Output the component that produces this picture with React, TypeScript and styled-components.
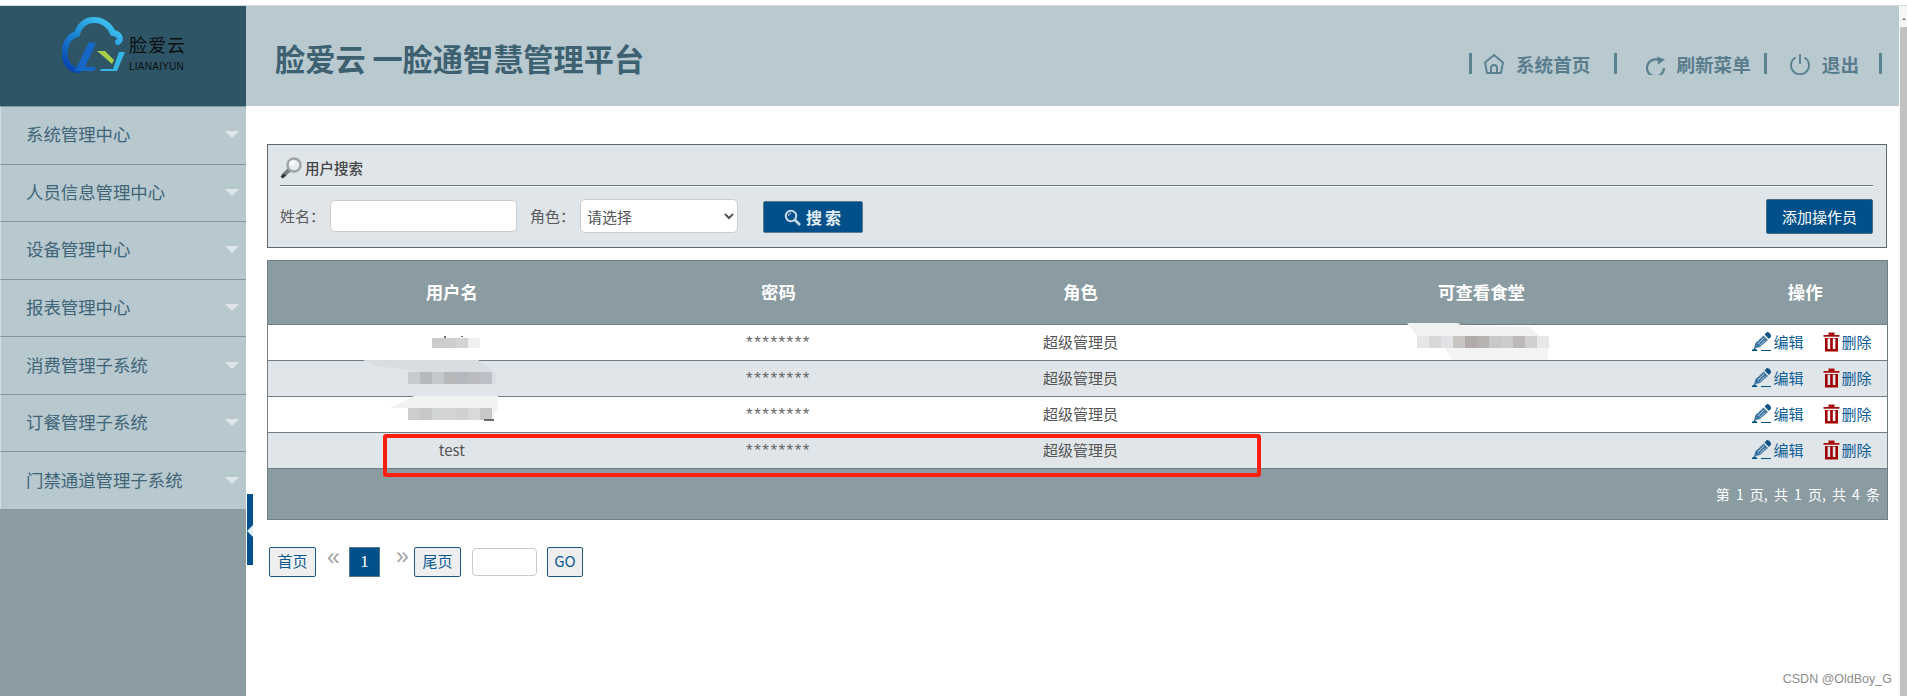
import React from 'react';
import styled, { createGlobalStyle } from 'styled-components';

const Global = createGlobalStyle`
  html, body { margin: 0; padding: 0; background: #fff; overflow: hidden; }
  * { box-sizing: border-box; }
`;
const CJK = `"Noto Sans CJK SC", "Liberation Sans", sans-serif`;

const Page = styled.div`
  width: 1907px; height: 696px; display: flex; flex-direction: column; font-family: ${CJK}; color: #555;
`;
const TopStrip = styled.div`
  height: 6px; flex: none; background: #fff; border-bottom: 1px solid #d4d8da;
`;
const Body = styled.div`
  flex: 1; display: flex; min-height: 0; position: relative;
`;
const Sidebar = styled.aside`
  width: 246px; flex: none; background: #8a9ba1; display: flex; flex-direction: column;
`;
const LogoBox = styled.div`
  height: 100px; flex: none; background: #2e5566; display: flex; align-items: flex-start; padding: 11px 0 0 62px; gap: 4px;
`;
const LogoText = styled.div`
  display: flex; flex-direction: column; padding-top: 17px; color: #0b0f12; width: 56px;
`;
const LogoCn = styled.span`
  font-size: 18px; line-height: 20px; letter-spacing: 1px; white-space: nowrap;
`;
const LogoEn = styled.span`
  font-family: "Liberation Sans", sans-serif; font-size: 10px; line-height: 10px; margin-top: 8px; letter-spacing: .25px; white-space: nowrap;
`;
const Menu = styled.nav`
  display: flex; flex-direction: column;
`;
const MenuItem = styled.div`
  height: 57.57px; background: #b7c8cf; border-top: 1px solid #84969d; border-left: 1px solid #d2dbdf;
  display: flex; align-items: center; justify-content: space-between; padding: 0 7px 3px 25px;
  font-size: 17.4px; color: #3f6577; white-space: nowrap;
`;
const Caret = styled.i`
  width: 0; height: 0; border-left: 7px solid transparent; border-right: 7px solid transparent; border-top: 7px solid #dfe6e9; display: block; position: relative; top: 1px;
`;
const Toggle = styled.div`
  position: absolute; left: 247px; top: 488px; width: 6px; height: 71px; background: #02508f;
  &::after {
    content: ''; position: absolute; left: 0; top: 31px; width: 0; height: 0;
    border-top: 6px solid transparent; border-bottom: 6px solid transparent; border-right: 6px solid #dff0fa;
  }
`;
const Main = styled.main`
  flex: 1; display: flex; flex-direction: column; min-width: 0;
`;
const Header = styled.header`
  height: 100px; flex: none; background: #b8c9d0; display: flex; align-items: center; justify-content: space-between; padding: 0 17px 0 29px;
`;
const Title = styled.h1`
  margin: 0; padding: 0 0 2px; font-size: 30.2px; line-height: 40px; font-weight: 700; color: #3e6172; white-space: nowrap; position: relative; top: 3px;
`;
const Nav = styled.div`
  display: flex; align-items: center; padding-top: 15px;
`;
const Sep = styled.i<{ $mr: number }>`
  width: 3px; height: 21px; background: #5d8292; display: block; margin-right: ${p => p.$mr}px;
`;
const NavIcon = styled.svg`
  width: 22px; height: 22px; flex: none; display: block; fill: none; stroke: #5a7f8f; stroke-width: 1.9;
`;
const NavLabel = styled.span<{ $l: number; $r: number }>`
  font-size: 18.6px; font-weight: 700; line-height: 24px; color: #5a7d8d; margin-left: ${p => p.$l}px; margin-right: ${p => p.$r}px; white-space: nowrap;
`;
const Content = styled.div`
  flex: 1; padding: 38px 12px 0 21px; background: #fff;
`;
const SearchPanel = styled.section`
  height: 104px; background: #e0e5e9; border: 1px solid #5d6b70; padding: 0 13px 0 12px; display: flex; flex-direction: column;
`;
const PanelTitle = styled.div`
  height: 41px; border-bottom: 1px solid #66767c; box-shadow: 0 1px 0 #fff; display: flex; align-items: center; gap: 3px;
  font-size: 14.5px; font-weight: 500; color: #444; padding-top: 5px; flex: none;
`;
const FormRow = styled.div`
  flex: 1; display: flex; align-items: center; padding-bottom: 1px;
`;
const Label = styled.label<{ $w: number }>`
  width: ${p => p.$w}px; font-size: 15px; color: #5a5a5a; white-space: nowrap; flex: none; position: relative; top: -1px;
`;
const TextInput = styled.input`
  width: 187px; height: 32px; border: 1px solid #ccc; border-radius: 5px; background: #fff; margin-right: 13px; outline: none; flex: none;
`;
const Select = styled.select`
  width: 158px; height: 34px; border: 1px solid #ccc; border-radius: 5px; background: #fff; color: #555;
  font-family: ${CJK}; font-size: 15px; padding-left: 2px; flex: none; outline: none;
`;
const SearchButton = styled.button`
  width: 100px; height: 32px; margin: 2px 0 0 25px; background: #02508a; border: 1px solid #5d7b90; border-radius: 2px; color: #e4edf3;
  display: flex; align-items: center; justify-content: center; gap: 5px; padding: 0 0 0 2px; flex: none;
  font-family: ${CJK}; font-size: 16px; font-weight: 700; letter-spacing: 3px;
`;
const AddButton = styled.button`
  width: 107px; height: 35px; margin-left: auto; background: #02508a; border: 1px solid #4a6a80; border-radius: 2px; color: #fff;
  font-family: ${CJK}; font-size: 15px; padding: 0; flex: none;
`;
const TableWrap = styled.div`
  position: relative; margin-top: 12px; width: 1620px;
`;
const Table = styled.table`
  width: 1620px; border-collapse: collapse; table-layout: fixed; border: 1px solid #6f7f85;
`;
const Th = styled.th`
  height: 64px; background: #8a9ba1; color: #fff; font-size: 17.4px; font-weight: 700; text-align: center; padding: 0 0 3px; border-bottom: 1px solid #6f7f85;
`;
const Tr = styled.tr<{ $alt?: boolean }>`
  background: ${p => (p.$alt ? '#e0e5e9' : '#fff')};
`;
const Td = styled.td`
  height: 36px; padding: 0 0 2px; text-align: center; font-size: 15px; color: #555; border-bottom: 1px solid #6f7f85; line-height: 20px;
`;
const Stars = styled.span`
  font-family: "Liberation Sans", sans-serif; font-size: 17px; letter-spacing: 1.5px; color: #666; position: relative; top: 1px;
`;
const Actions = styled.div`
  display: flex; align-items: center; padding-left: 28px; color: #02508a; font-size: 15px;
`;
const ActionLabel = styled.span<{ $r?: number }>`
  margin-left: 2px; margin-right: ${p => p.$r ?? 0}px; white-space: nowrap; color: #0a5a94;
`;
const FooterCell = styled.td`
  height: 51px; background: #8a9ba1; color: #fff; font-size: 14px; text-align: right; padding: 0 7px 0 0; word-spacing: 3px;
`;
const RedBox = styled.div`
  position: absolute; left: 116px; top: 174px; width: 878px; height: 43px; border: 4px solid #ff1e10; border-radius: 3px; pointer-events: none;
`;
const Redaction = styled.svg`
  position: absolute; left: 0; top: 0; width: 1620px; height: 260px; pointer-events: none;
`;
const Pager = styled.div`
  margin-top: 27px; padding-left: 2px; display: flex; align-items: center; height: 30px;
`;
const PageBtn = styled.button<{ $w: number }>`
  width: ${p => p.$w}px; height: 30px; flex: none; background: #efefef; border: 1px solid #1d5a85; border-radius: 2px; color: #0a5a94;
  font-family: ${CJK}; font-size: 15px; padding: 0 0 3px;
`;
const Arrow = styled.span<{ $l: number; $r: number; $t: number }>`
  width: 13px; margin-left: ${p => p.$l}px; margin-right: ${p => p.$r}px; position: relative; top: ${p => p.$t}px;
  font-family: "Liberation Sans", sans-serif; font-size: 23px; line-height: 20px; color: #a3a3a3; text-align: center; flex: none;
`;
const Current = styled.span`
  width: 31px; height: 30px; background: #02508a; border: 1px solid #56788e; color: #fff; display: flex; align-items: center; justify-content: center;
  font-family: "Liberation Serif", serif; font-size: 17px; flex: none;
`;
const JumpInput = styled.input`
  width: 65px; height: 28px; margin: 0 10px 0 11px; border: 1px solid #ccc; border-radius: 4px; background: #fff; outline: none; flex: none;
`;
const Watermark = styled.div`
  position: absolute; right: 15px; bottom: 9px; font-size: 12.5px; line-height: 16px; color: #8c8c8c; font-family: "Liberation Sans", sans-serif;
`;
const Scrollbar = styled.div`
  width: 8px; flex: none; background: #f6f6f6; display: flex; flex-direction: column; padding-left: 1px;
`;
const ScrollUp = styled.div`
  height: 21px; flex: none; display: flex; justify-content: center; padding-top: 12px;
  &::before { content: ''; width: 0; height: 0; border-left: 2px solid transparent; border-right: 2px solid transparent; border-bottom: 2px solid #777; }
`;
const ScrollThumb = styled.div`
  flex: 1; background: #c1c1c1;
`;

const Logo = () => (
  <svg width="63" height="56" viewBox="0 0 63 56" style={{ flex: 'none' }}>
    <defs>
      <linearGradient id="lg" x1="0.85" y1="0" x2="0.1" y2="1">
        <stop offset="0" stopColor="#40c8f2" />
        <stop offset="0.5" stopColor="#1d86d6" />
        <stop offset="1" stopColor="#0845ac" />
      </linearGradient>
    </defs>
    <path d="M56 25c3-1 3-8-5-9-3-7-10-13-19-13-10 0-15 7-17 14C7 19 2.500 27 2.500 36c0 10 6 17 14 17" fill="none" stroke="url(#lg)" strokeWidth="6" strokeLinecap="round" />
    <path d="M27 25l7 1-11 24h11l-2 4H13z" fill="#1467c6" />
    <path d="M35 34l8 0 9 9-2 4-9-8z" fill="#a8cf48" />
    <path d="M57 35h6l-8 19H38l1-2h12z" fill="#35b4e6" />
  </svg>
);

const Pencil = () => (
  <svg width="20" height="19" viewBox="0 0 20 19" style={{ flex: 'none' }}>
    <path d="M11.500 3.500l4.500 4.500-8 7-6 1.500 1.500-5.500z" fill="#3f78a5" />
    <path d="M12.500 2.500l2.500-2.500c1.500-.5 4.500 2.500 4 4.500L17 7z" fill="#0f5288" />
    <path d="M4.500 10l6-6M6 12l6-6M8 13.500l5-5" stroke="#d8e2ea" strokeWidth="0.8" />
    <path d="M0 18.500l3-2 2 2zM9 18.500h10" stroke="#02508a" strokeWidth="1" fill="#02508a" />
  </svg>
);
const Trash = () => (
  <svg width="17" height="20" viewBox="0 0 17 20" style={{ flex: 'none' }}>
    <path d="M0.500 3h16v1.800H0.500zM5.500 0.500h6V3H5.500z" fill="#a80c0c" />
    <path d="M2 6H15V19.500H2zM4.600 6.500V17H7.200V6.500zM9.800 6.500V17H12.400V6.500z" fill="#a00000" fillRule="evenodd" />
  </svg>
);
const Lens = () => (
  <svg width="22" height="22" viewBox="0 0 22 22" style={{ flex: 'none' }}>
    <rect x="0" y="0" width="22" height="22" fill="#d9e4e6" opacity="0.6" />
    <path d="M1 18l7-7 3 3-7 7z" fill="#7b8080" />
    <circle cx="14" cy="8" r="6.500" fill="#e8eef0" stroke="#9ea3a3" strokeWidth="2.400" />
    <path d="M1.500 20.500l3.500-3" stroke="#333" strokeWidth="2.800" />
    <circle cx="12" cy="6" r="2.500" fill="#fff" />
  </svg>
);
const SearchGlyph = () => (
  <svg width="17" height="17" viewBox="0 0 17 17" fill="none" stroke="#c8dae8" style={{ flex: 'none' }}>
    <circle cx="7" cy="7" r="5.200" strokeWidth="2" />
    <path d="M11 11l5 5" strokeWidth="2.600" />
    <path d="M4.500 7a2.600 2.600 0 0 1 2.600-2.600" strokeWidth="1" />
  </svg>
);

const users = [0, 1, 2, 3];
const mosaic = (x: number, y: number, h: number, w: number, colors: string[]) =>
  colors.map((c, i) => <rect key={`${x}-${y}-${i}`} x={x + i * w} y={y} width={w} height={h} fill={c} />);

export default function App() {
  return (
    <Page>
      <Global />
      <TopStrip />
      <Body>
        <Sidebar>
          <LogoBox>
            <Logo />
            <LogoText>
              <LogoCn>脸爱云</LogoCn>
              <LogoEn>LIANAIYUN</LogoEn>
            </LogoText>
          </LogoBox>
          <Menu>
            {['系统管理中心', '人员信息管理中心', '设备管理中心', '报表管理中心', '消费管理子系统', '订餐管理子系统', '门禁通道管理子系统'].map(t => (
              <MenuItem key={t}>
                <span>{t}</span>
                <Caret />
              </MenuItem>
            ))}
          </Menu>
        </Sidebar>
        <Toggle />
        <Main>
          <Header>
            <Title>脸爱云 一脸通智慧管理平台</Title>
            <Nav>
              <Sep $mr={11} />
              <NavIcon viewBox="0 0 22 22">
                <path d="M11 2L20 9.500 18 20H4L2 9.500z" strokeLinejoin="round" />
                <path d="M8 19v-4a3 3 0 0 1 6 0v4" />
              </NavIcon>
              <NavLabel $l={11} $r={24}>系统首页</NavLabel>
              <Sep $mr={27} />
              <NavIcon viewBox="0 0 22 22" style={{ strokeWidth: 2.2 }}>
                <path d="M16.500 8a8.500 8.500 0 1 0 3.500 7" />
                <path d="M13 3.500l8 3-7 5z" fill="#5a7f8f" stroke="none" />
              </NavIcon>
              <NavLabel $l={10} $r={13}>刷新菜单</NavLabel>
              <Sep $mr={22} />
              <NavIcon viewBox="0 0 22 22">
                <path d="M6.500 4.500a9 9 0 1 0 9 0" />
                <path d="M11 1v10" />
              </NavIcon>
              <NavLabel $l={11} $r={20}>退出</NavLabel>
              <Sep $mr={0} />
            </Nav>
          </Header>
          <Content>
            <SearchPanel>
              <PanelTitle>
                <Lens />
                用户搜索
              </PanelTitle>
              <FormRow>
                <Label $w={50}>姓名：</Label>
                <TextInput />
                <Label $w={50}>角色：</Label>
                <Select defaultValue="">
                  <option value="">请选择</option>
                </Select>
                <SearchButton>
                  <SearchGlyph />
                  <span>搜索</span>
                </SearchButton>
                <AddButton>添加操作员</AddButton>
              </FormRow>
            </SearchPanel>
            <TableWrap>
              <Table>
                <colgroup>
                  <col style={{ width: 368 }} />
                  <col style={{ width: 286 }} />
                  <col style={{ width: 318 }} />
                  <col style={{ width: 484 }} />
                  <col style={{ width: 164 }} />
                </colgroup>
                <thead>
                  <tr>
                    {['用户名', '密码', '角色', '可查看食堂', '操作'].map(h => (
                      <Th key={h}>{h}</Th>
                    ))}
                  </tr>
                </thead>
                <tbody>
                  {users.map(i => (
                    <Tr key={i} $alt={i % 2 === 1}>
                      <Td>{i === 3 ? 'test' : ''}</Td>
                      <Td><Stars>********</Stars></Td>
                      <Td>超级管理员</Td>
                      <Td />
                      <Td>
                        <Actions>
                          <Pencil />
                          <ActionLabel $r={19}>编辑</ActionLabel>
                          <Trash />
                          <ActionLabel>删除</ActionLabel>
                        </Actions>
                      </Td>
                    </Tr>
                  ))}
                  <tr>
                    <FooterCell colSpan={5}>第 1 页, 共 1 页, 共 4 条</FooterCell>
                  </tr>
                </tbody>
              </Table>
              <Redaction viewBox="267 260 1620 260">
                <rect x="444" y="336" width="2" height="2" fill="#5b6b7b" />
                <rect x="461" y="336" width="2" height="1" fill="#5b6b7b" />
                {mosaic(432, 338, 10, 12, ['#cdcbcb', '#cfcdcd', '#d3d3d3', '#efefef'])}
                <path d="M363 360H478L495 372 496 384H408V372H423L393 368 377 366z" fill="#d8dde1" />
                {mosaic(408, 372, 12, 12, ['#c7cbce', '#b5b9bb', '#c4c8cb', '#b6b7b8', '#b4b7be', '#b9bbbe', '#bdbfc6'])}
                <path d="M414 396H498V408L492 420H408V408H390z" fill="#f1f3f3" />
                {mosaic(408, 408, 12, 12, ['#cfcdcc', '#c9c6c6', '#d0d4d5', '#d3d3d3', '#d1d0d0', '#dad9d7', '#c8c6c6'])}
                <rect x="484" y="419" width="10" height="2" fill="#6b6570" />
                <path d="M1407 323H1458L1462 326 1530 327 1540 336H1417z" fill="#f0f2f2" />
                {mosaic(1417, 336, 12, 12, ['#e6e6e6', '#d8d8d8', '#e2e2e6', '#c8c4c2', '#b0aba9', '#b5b2b0', '#c8c8c8', '#cccccc', '#bdb8b8', '#cfcfcf', '#e8e8e8'])}
                <path d="M1445 348H1548V360H1452z" fill="#f3f3f3" />
              </Redaction>
              <RedBox />
            </TableWrap>
            <Pager>
              <PageBtn $w={47}>首页</PageBtn>
              <Arrow $l={11} $r={9} $t={-5}>«</Arrow>
              <Current>1</Current>
              <Arrow $l={16} $r={5} $t={-6}>»</Arrow>
              <PageBtn $w={47}>尾页</PageBtn>
              <JumpInput />
              <PageBtn $w={36}>GO</PageBtn>
            </Pager>
          </Content>
        </Main>
        <Scrollbar>
          <ScrollUp />
          <ScrollThumb />
        </Scrollbar>
        <Watermark>CSDN @OldBoy_G</Watermark>
      </Body>
    </Page>
  );
}
